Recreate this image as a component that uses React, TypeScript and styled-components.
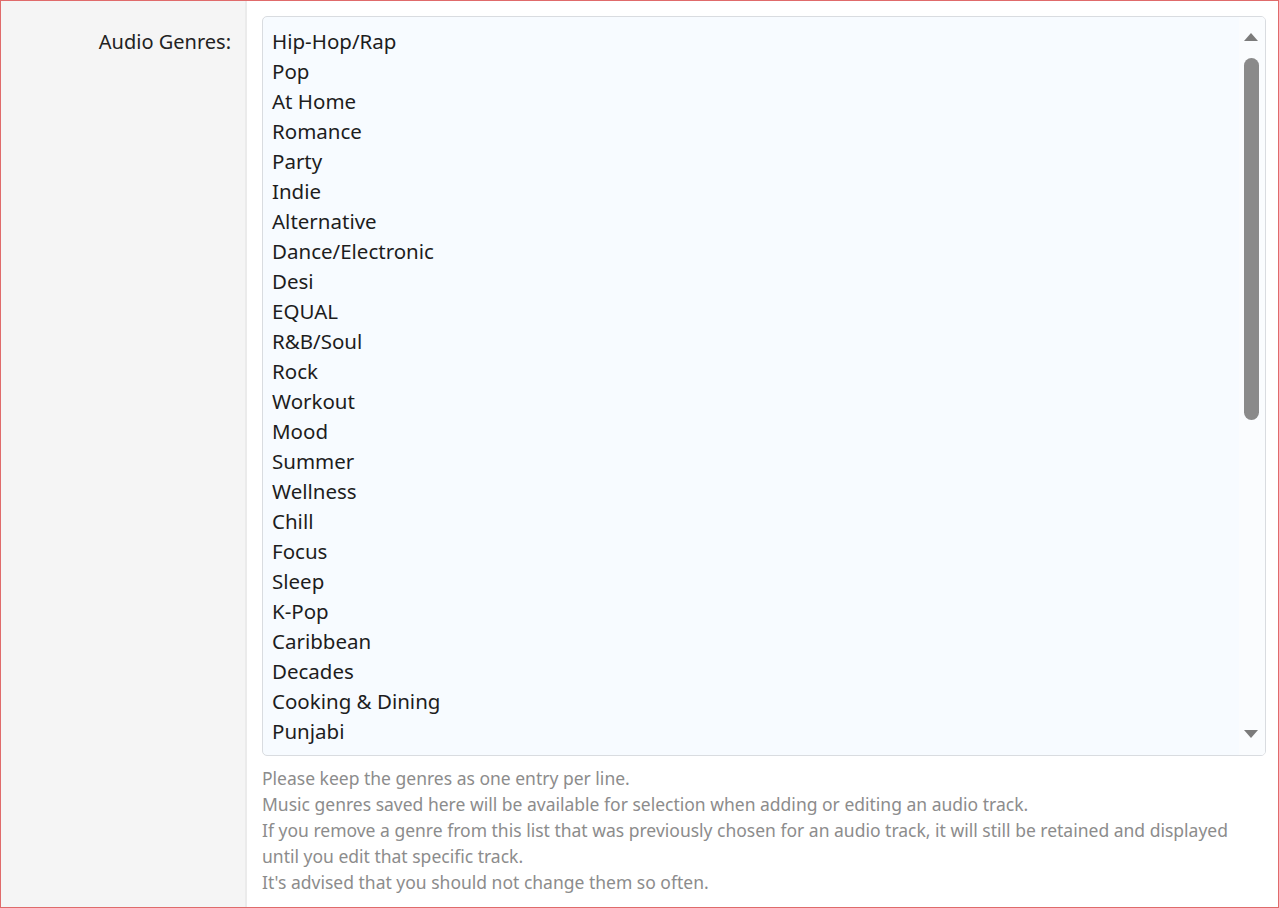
import styled, { createGlobalStyle } from 'styled-components';

const genres = [
  'Hip-Hop/Rap',
  'Pop',
  'At Home',
  'Romance',
  'Party',
  'Indie',
  'Alternative',
  'Dance/Electronic',
  'Desi',
  'EQUAL',
  'R&B/Soul',
  'Rock',
  'Workout',
  'Mood',
  'Summer',
  'Wellness',
  'Chill',
  'Focus',
  'Sleep',
  'K-Pop',
  'Caribbean',
  'Decades',
  'Cooking & Dining',
  'Punjabi',
  'Jazz',
  'Latin',
  'Country',
  'Classical',
  'Folk & Acoustic',
  'Metal',
  'Blues',
  'Gaming',
  'Travel',
];

const help = [
  'Please keep the genres as one entry per line.',
  'Music genres saved here will be available for selection when adding or editing an audio track.',
  'If you remove a genre from this list that was previously chosen for an audio track, it will still be retained and displayed until you edit that specific track.',
  "It's advised that you should not change them so often.",
];

const Global = createGlobalStyle`
  html, body { margin: 0; padding: 0; }
  body {
    font-family: "Noto Sans", "Open Sans", "Liberation Sans", sans-serif;
    background: #fff;
  }
`;

const Frame = styled.div`
  box-sizing: border-box;
  height: 908px;
  border: 1px solid #e06b6b;
  display: grid;
  grid-template-columns: 246px 1fr;
  overflow: hidden;
`;

const LabelCol = styled.div`
  background: #f5f5f5;
  border-right: 2px solid #ebebeb;
  padding: 26px 14px 0 0;
  text-align: right;
`;

const Label = styled.label`
  font-size: 20px;
  line-height: 30px;
  color: #222;
`;

const FieldCol = styled.div`
  padding: 15px 12px 0 15px;
  display: flex;
  flex-direction: column;
  gap: 9px;
`;

const AreaWrap = styled.div`
  position: relative;
  height: 740px;
`;

const Area = styled.textarea`
  box-sizing: border-box;
  width: 100%;
  height: 100%;
  margin: 0;
  resize: none;
  overflow: hidden;
  border: 1px solid #d9dce0;
  border-radius: 5px;
  background: #f7fbff;
  padding: 9px 40px 0 9px;
  font-family: inherit;
  font-size: 20.5px;
  line-height: 30px;
  color: #1d1d1d;
  outline: none;
`;

/* overlay scrollbar drawn over the textarea's right edge */
const Track = styled.div`
  position: absolute;
  top: 1px;
  right: 1px;
  bottom: 1px;
  width: 26px;
  box-sizing: border-box;
  padding: 16px 5px 17px;
  display: flex;
  flex-direction: column;
  align-items: flex-start;
  background: #fafcfe;
  border-radius: 0 4px 4px 0;
`;

const Arrow = styled.div<{ $down?: boolean }>`
  width: 0;
  height: 0;
  flex: none;
  border-left: 7px solid transparent;
  border-right: 7px solid transparent;
  ${({ $down }) =>
    $down
      ? 'margin-top: auto; border-top: 8px solid #7b7b7b;'
      : 'border-bottom: 8px solid #7b7b7b;'}
`;

const Thumb = styled.div`
  margin-top: 17px;
  width: 15px;
  height: 362px;
  border-radius: 8px;
  background: #8a8a8a;
`;

const Help = styled.div`
  font-size: 17.5px;
  line-height: 26px;
  color: #8c8c8c;
  padding-right: 20px;
`;

export default function App() {
  return (
    <>
      <Global />
      <Frame>
        <LabelCol>
          <Label htmlFor="genres">Audio Genres:</Label>
        </LabelCol>
        <FieldCol>
          <AreaWrap>
            <Area id="genres" defaultValue={genres.join('\n')} spellCheck={false} />
            <Track>
              <Arrow />
              <Thumb />
              <Arrow $down />
            </Track>
          </AreaWrap>
          <Help>
            {help.map((h) => (
              <div key={h}>{h}</div>
            ))}
          </Help>
        </FieldCol>
      </Frame>
    </>
  );
}
